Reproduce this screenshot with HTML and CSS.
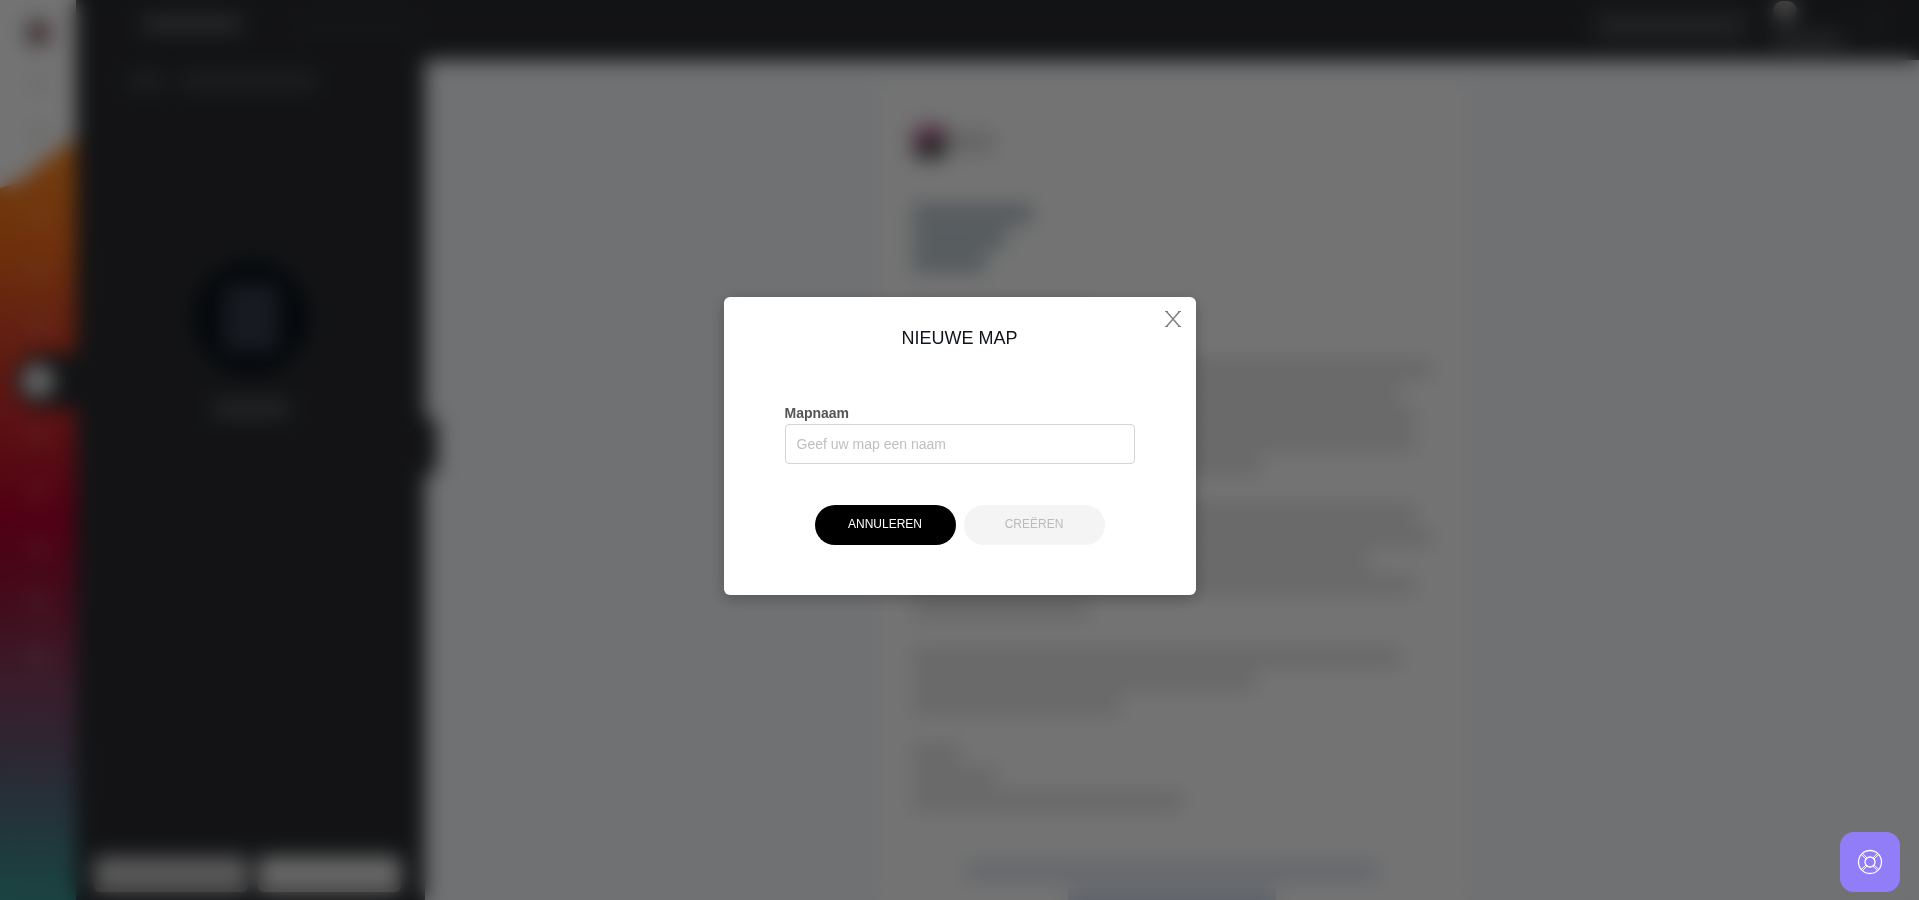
FILE: index.html
```html
<!DOCTYPE html>
<html lang="nl">
    <head>
        <meta charset="utf-8">
        <title>Nieuwe map</title>
        <link rel="stylesheet" href="styles.css">
    </head>

    <body>
        <div class="app" aria-hidden="true" inert>
            <nav class="rail">
                <div class="rail-top">
                    <span class="rail-logo"></span>
                    <span class="rail-icon dark"></span>
                    <span class="rail-icon dark"></span>
                </div>
                <div class="rail-item"><span class="rail-icon"></span></div>
                <div class="rail-item"><span class="rail-icon"></span></div>
                <div class="rail-item"><span class="rail-icon"></span></div>
                <div class="rail-item active"><span class="rail-icon"></span></div>
                <div class="rail-item"><span class="rail-icon"></span></div>
                <div class="rail-item"><span class="rail-icon"></span></div>
                <div class="rail-item"><span class="rail-icon"></span></div>
                <div class="rail-item"><span class="rail-icon"></span></div>
                <div class="rail-item"><span class="rail-icon"></span></div>
            </nav>

            <div class="workspace">
                <header class="topbar">
                    <span class="bar brand"></span>
                    <span class="bar status"></span>
                    <span class="topbar-action"><span class="bar"></span></span>
                    <div class="account">
                        <span class="avatar"></span>
                        <span class="bar"></span>
                    </div>
                    <span class="bar more"></span>
                </header>

                <div class="columns">
                    <aside class="sidebar">
                        <div class="crumbs">
                            <span class="bar crumb"></span>
                            <span class="bar crumb current"></span>
                        </div>
                        <div class="empty">
                            <div class="empty-circle"><span class="empty-icon"></span></div>
                            <span class="bar empty-text"></span>
                        </div>
                        <div class="sidebar-foot">
                            <button class="foot-btn wide" type="button"></button>
                            <button class="foot-btn" type="button"></button>
                        </div>
                        <span class="handle"></span>
                    </aside>

                    <main class="canvas">
                        <article class="mail">
                            <div class="mail-logo">
                                <span class="mail-mark"></span>
                                <span class="line mail-name"></span>
                            </div>
                            <div class="mail-title">
                                <span class="line w23"></span>
                                <span class="line w18"></span>
                                <span class="line w14"></span>
                            </div>
                            <div class="para">
                                <span class="line w34"></span>
                            </div>
                            <div class="para first">
                                <span class="line w100"></span>
                                <span class="line w94"></span>
                                <span class="line w97"></span>
                                <span class="line w97"></span>
                                <span class="line w67"></span>
                            </div>
                            <div class="para">
                                <span class="line w97"></span>
                                <span class="line w100"></span>
                                <span class="line w88"></span>
                                <span class="line w97"></span>
                                <span class="line w34"></span>
                            </div>
                            <div class="para">
                                <span class="line w94"></span>
                                <span class="line w66"></span>
                                <span class="line w40"></span>
                            </div>
                            <div class="para">
                                <span class="line w9"></span>
                                <span class="line w16"></span>
                                <span class="line w52"></span>
                            </div>
                            <div class="para links">
                                <span class="line w80"></span>
                                <span class="line w40"></span>
                            </div>
                        </article>
                    </main>
                </div>
            </div>
        </div>

        <div class="overlay">
            <form class="modal" role="dialog" aria-modal="true" aria-labelledby="modalTitle">
                <button class="close" type="button" aria-label="Sluiten">
                    <svg width="16" height="16" viewBox="0 0 16 16" fill="none" stroke="#808080" stroke-width="1.5">
                        <path d="M1.5 0.5 L14.5 15.5 M14.5 0.5 L1.5 15.5"/>
                        <path d="M0 0.5 H3 M13 0.5 H16 M0 15.5 H3 M13 15.5 H16" stroke-width="1"/>
                    </svg>
                </button>
                <h1 class="title" id="modalTitle">NIEUWE MAP</h1>
                <label class="label" for="mapName">Mapnaam</label>
                <input class="field" id="mapName" type="text" placeholder="Geef uw map een naam">
                <div class="gr-btn">
                    <button class="btn cancel" type="button">ANNULEREN</button>
                    <button class="btn create" type="submit" disabled>CREËREN</button>
                </div>
            </form>
        </div>

        <button class="help" type="button" aria-label="Help">
            <svg width="26" height="26" viewBox="0 0 26 26" fill="none" stroke="#fff" stroke-width="1.3">
                <circle cx="13" cy="13" r="11.5"/>
                <circle cx="13" cy="13" r="5"/>
                <path d="M4.3 5.5 L9 10 M5.5 4.3 L10 9 M20.5 4.3 L16 9 M21.7 5.5 L17 10 M4.3 20.5 L9 16 M5.5 21.7 L10 17 M20.5 21.7 L16 17 M21.7 20.5 L17 16" stroke-width="1"/>
            </svg>
        </button>
    </body>
</html>
```

FILE: styles.css
```css
* {
    box-sizing: border-box;
}

body {
    margin: 0;
    font-family: "Liberation Sans", Arial, sans-serif;
    background-color: #2a2c30;
}

/* app behind the dialog */
.app {
    display: flex;
    height: 100vh;
    overflow: hidden;
}

.bar {
    display: block;
    height: 14px;
    border-radius: 4px;
    background-color: #5a5b5f;
}

.rail {
    flex: none;
    width: 76px;
    background-image: linear-gradient(#ff8a20 140px, #f46b1b 250px, #da4728 330px, #c8242c 430px, #b2002c 520px, #931b3e 600px, #813e5d 680px, #625974 760px, #4b7885 830px, #3a9693 900px);
}

.rail-top {
    display: flex;
    flex-direction: column;
    align-items: center;
    gap: 28px;
    height: 188px;
    padding-top: 20px;
    background-color: #fff;
    clip-path: polygon(0 0, 100% 0, 100% 137px, 60% 160px, 25% 182px, 0 188px);
}

.rail-logo {
    width: 24px;
    height: 26px;
    border-radius: 8px;
    background-image: linear-gradient(90deg, #888, #a06872);
}

.rail-icon {
    width: 20px;
    height: 20px;
    border-radius: 50%;
    background-color: rgba(255, 255, 255, 0.12);
}

.rail-icon.dark {
    background-color: #f0f0f0;
}

.rail-item {
    display: flex;
    align-items: center;
    justify-content: center;
    height: 55px;
}

.rail-item.active {
    margin-left: 14px;
    padding-right: 14px;
    border-radius: 28px 0 0 28px;
    background-color: #2a2c30;
}

.active .rail-icon {
    width: 34px;
    height: 34px;
    background-color: #e0e0e0;
}

.workspace {
    display: flex;
    flex: 1;
    flex-direction: column;
    min-width: 0;
}

.topbar {
    display: flex;
    flex: none;
    align-items: center;
    height: 60px;
    padding: 0 36px 12px 66px;
    background-color: #2a2c30;
}

.brand {
    width: 100px;
    height: 16px;
}

.status {
    width: 120px;
    margin-left: 56px;
    background-color: #303236;
}

.topbar-action {
    margin: 4px 20px 0 auto;
    padding: 12px;
    border-radius: 4px;
    background-color: #34363a;
}

.topbar-action .bar {
    width: 140px;
    background-color: #54555a;
}

.account {
    display: flex;
    flex-direction: column;
    gap: 12px;
    width: 70px;
}

.account .bar {
    background-color: #58595c;
}

.avatar {
    width: 24px;
    height: 20px;
    border-radius: 10px;
    background-color: #a8a8a8;
}

.more {
    width: 20px;
    margin-left: 20px;
    background-color: #38393c;
}

.columns {
    display: flex;
    flex: 1;
    min-height: 0;
}

.sidebar {
    position: relative;
    display: flex;
    flex: none;
    flex-direction: column;
    width: 349px;
    background-color: #2a2c30;
}

.crumbs {
    display: flex;
    gap: 16px;
    padding: 14px 52px;
}

.crumb {
    width: 36px;
    background-color: #48494c;
}

.crumb.current {
    width: 136px;
}

.empty {
    display: flex;
    flex: 1;
    flex-direction: column;
    align-items: center;
    padding-top: 158px;
}

.empty-circle {
    display: flex;
    align-items: center;
    justify-content: center;
    width: 116px;
    height: 116px;
    border-radius: 50%;
    background-color: #0c131a;
}

.empty-icon {
    width: 56px;
    height: 68px;
    border-radius: 6px;
    background-color: #343c48;
}

.empty-text {
    width: 76px;
    margin-top: 26px;
}

.sidebar-foot {
    display: flex;
    gap: 10px;
    padding: 0 24px 8px 18px;
}

.foot-btn {
    flex: 1;
    height: 36px;
    border: none;
    border-radius: 6px;
    background-color: #e4e4e4;
}

.foot-btn.wide {
    flex: 0 0 154px;
    background-color: #c4c4c4;
}

/* collapse handle sticks out over the canvas */
.handle {
    position: absolute;
    top: 356px;
    right: -12px;
    width: 28px;
    height: 60px;
    border-radius: 12px;
    background-color: #2a2c30;
}

.canvas {
    flex: 1;
    padding-top: 20px;
    overflow: hidden;
    background-color: #f8fafe;
}

.mail {
    width: 590px;
    min-height: 100%;
    margin: 0 auto;
    padding: 42px 36px 0;
    background-color: #fff;
}

.line {
    display: block;
    height: 14px;
    background-color: #dcdcdc;
}

.mail-logo {
    display: flex;
    align-items: center;
    gap: 6px;
    height: 40px;
}

.mail-mark {
    width: 34px;
    height: 34px;
    border-radius: 10px;
    background-image: linear-gradient(160deg, #c8689c 30%, #505050 60%);
}

.mail-name {
    width: 40px;
    height: 22px;
}

.mail-title {
    display: grid;
    gap: 4px;
    margin-top: 42px;
}

.mail-title .line {
    height: 20px;
    background-color: #b8c4cc;
}

.para {
    display: grid;
    gap: 10px;
    margin-top: 34px;
}

.para.first {
    margin-top: 42px;
}

.links {
    justify-items: center;
    margin-top: 56px;
}

.links .line {
    background-color: #d4dcea;
}

.w9 { width: 9%; }
.w14 { width: 14%; }
.w16 { width: 16%; }
.w18 { width: 18%; }
.w23 { width: 23%; }
.w34 { width: 34%; }
.w40 { width: 40%; }
.w52 { width: 52%; }
.w66 { width: 66%; }
.w67 { width: 67%; }
.w80 { width: 80%; }
.w88 { width: 88%; }
.w94 { width: 94%; }
.w97 { width: 97%; }
.w100 { width: 100%; }

/* dialog */
.overlay {
    position: fixed;
    inset: 0;
    display: flex;
    align-items: center;
    justify-content: center;
    padding: 0 16px 8px;
    background-color: rgba(0, 0, 0, 0.55);
    backdrop-filter: blur(10px);
}

.modal {
    position: relative;
    display: flex;
    flex-direction: column;
    width: 100%;
    max-width: 472px;
    padding: 29px 61px 50px;
    border-radius: 6px;
    background-color: #fff;
    box-shadow: 0 4px 16px rgba(0, 0, 0, 0.25);
}

.close {
    position: absolute;
    top: 14px;
    right: 15px;
    display: flex;
    padding: 0;
    border: none;
    background: none;
    cursor: pointer;
}

.title {
    margin: 0 0 54px;
    font-size: 18px;
    font-weight: normal;
    line-height: 24px;
    text-align: center;
    color: #10151c;
}

.label {
    margin-bottom: 2px;
    font-size: 14px;
    font-weight: bold;
    line-height: 18px;
    color: #555;
}

.field {
    height: 40px;
    padding: 0 11px;
    border: 1px solid #d4d4d4;
    border-radius: 4px;
    font-family: inherit;
    font-size: 14px;
    color: #333;
}

.field::placeholder {
    color: #bfbfbf;
}

.gr-btn {
    display: flex;
    justify-content: center;
    gap: 8px;
    margin-top: 41px;
}

.btn {
    width: 141px;
    height: 40px;
    padding: 0 0 2px;
    border: none;
    border-radius: 20px;
    font-family: inherit;
    font-size: 12px;
    cursor: pointer;
}

.cancel {
    background-color: #000;
    color: #fff;
}

.cancel:hover {
    background-color: #333;
}

.create {
    background-color: #f4f4f4;
    color: #bbb;
    cursor: default;
}

.help {
    position: fixed;
    right: 19px;
    bottom: 8px;
    display: flex;
    align-items: center;
    justify-content: center;
    width: 60px;
    height: 60px;
    padding: 0;
    border: none;
    border-radius: 14px;
    background-color: #917df7;
    cursor: pointer;
}
```
